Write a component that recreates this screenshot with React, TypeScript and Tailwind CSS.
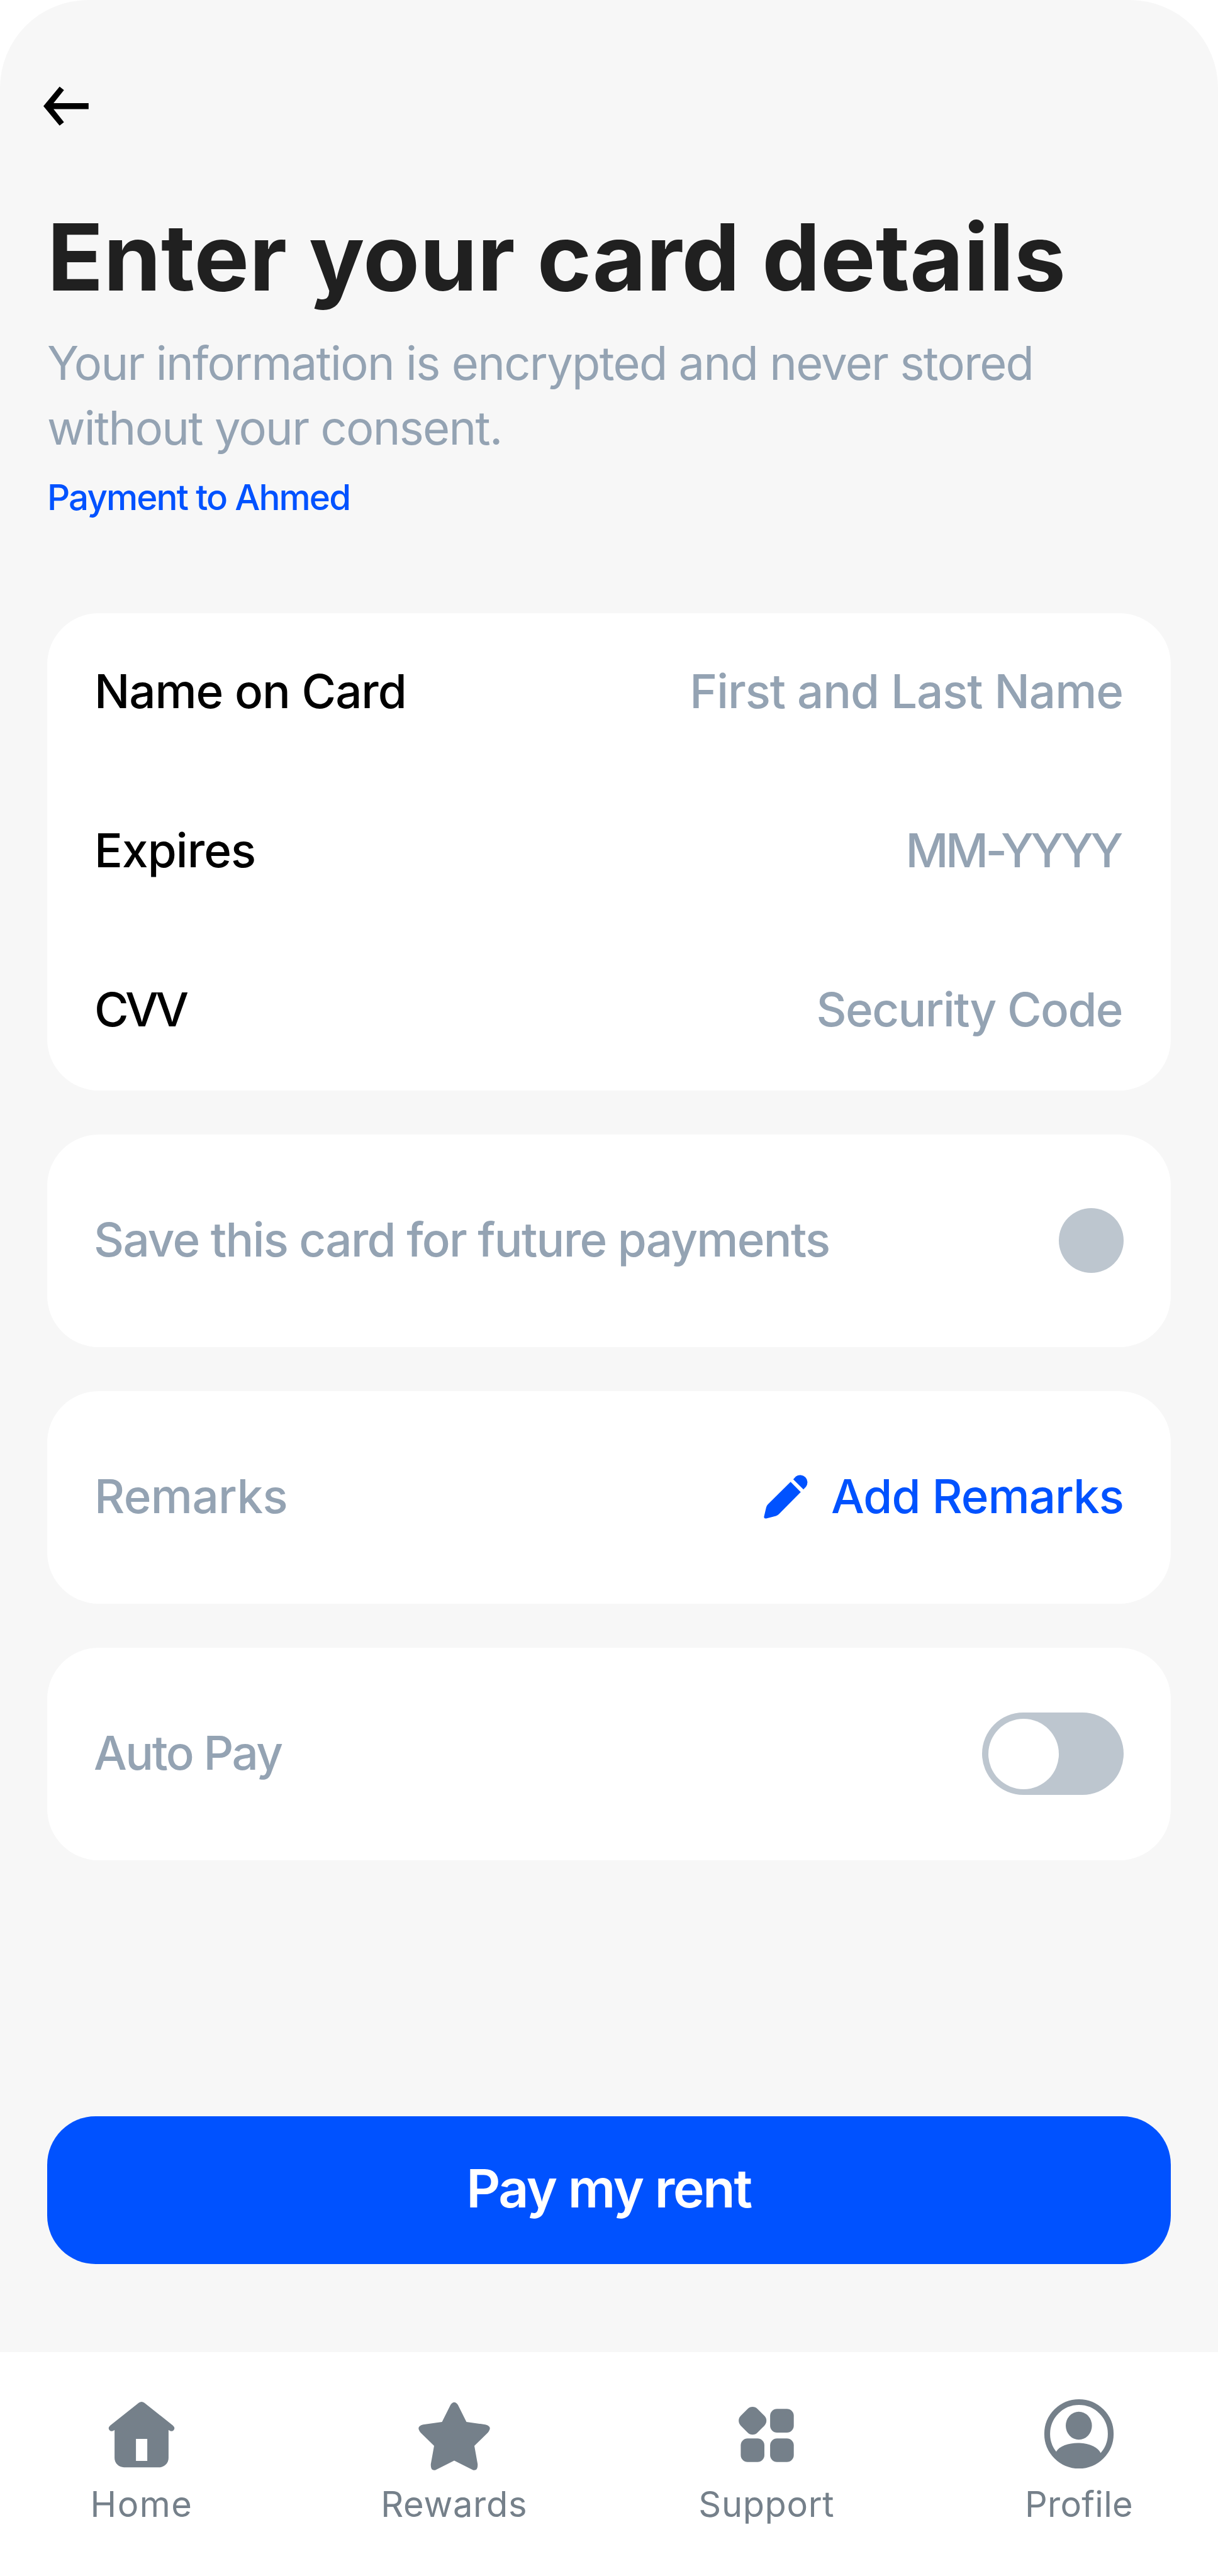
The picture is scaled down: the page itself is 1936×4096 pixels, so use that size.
interface FieldProps {
  label: string;
  placeholder: string;
  labelClass: string;
  placeholderClass: string;
}
const Field: React.FC<FieldProps> = ({ label, placeholder, labelClass, placeholderClass }) => {
  return (
    <div className="flex h-[253px] items-center justify-between pb-1">
      <span className={`text-black ${labelClass}`}>{label}</span>
      <span className={`text-[#94a3b3] ${placeholderClass}`}>{placeholder}</span>
    </div>
  );
};

interface OptionCardProps {
  label: string;
  labelClass: string;
  children?: React.ReactNode;
}
const OptionCard: React.FC<OptionCardProps> = ({ label, labelClass, children }) => {
  return (
    <div className="flex h-[337.4px] items-center justify-between rounded-[82px] bg-white pr-[75px] pl-[74px]">
      <span className={`pb-1 text-[#94a3b3] ${labelClass}`}>{label}</span>
      {children}
    </div>
  );
};

const BackArrow = () => (
  <svg className="block h-[64px] w-[73px]" viewBox="0 0 73 64" fill="#000">
    <path d="M0 31.8 25.7.7 32.7 6.3 16.1 26.9H71.8V36.5H16.1L32.7 57.2 25.7 62.8Z" />
  </svg>
);

const PencilIcon = () => (
  <svg className="block h-[74px] w-[71px]" viewBox="60 62 368 384" fill="#0052ff">
    <path d="M281 136 365 220 185 402Q174 413 160 417L80 438Q60 441 62 422L80 346Q84 331 95 320Z" />
    <path d="M303 115 324 92A60 60 0 0 1 408 176L387 198Z" />
  </svg>
);

const HomeIcon = () => (
  <path
    fillRule="evenodd"
    d="M60.3 6.6Q56 3.6 51.7 6.6L6.4 42.4Q1.8 46.4 5 50.2 8.6 53.4 13.1 49.8V94.2A15 15 0 0 0 28.1 109.2H83.9A15 15 0 0 0 98.9 94.2V49.8Q103.4 53.4 107 50.2 110.2 46.4 105.6 42.4ZM47.1 64H65.1V99H47.1Z"
  />
);

const StarIcon = () => (
  <path d="M50.2 9.8Q56 1.6 61.8 9.8L75.4 37 105.5 41.2Q116 43.8 111.2 51.6 110.4 53 109 54.4L88 75 93.2 104Q93.9 115.4 85.8 113.6L56 98.6 26.2 113.6Q18.1 115.4 18.8 104L24 75 3 54.4Q1.6 53 .8 51.6-4 43.8 6.5 41.2L36.6 37Z" />
);

const SupportIcon = () => (
  <>
    <rect x="15.4" y="16.3" width="37.6" height="37.6" rx="11" transform="rotate(45 34.2 35.1)" />
    <rect x="62.1" y="16.3" width="37.6" height="37.6" rx="11" />
    <rect x="15.4" y="63.2" width="37.6" height="37.6" rx="11" />
    <rect x="62.1" y="63.2" width="37.6" height="37.6" rx="11" />
  </>
);

const ProfileIcon = () => (
  <>
    <circle cx="56" cy="56" r="50.5" fill="none" stroke="currentColor" strokeWidth="9.2" />
    <ellipse cx="55.8" cy="43" rx="20.8" ry="22.3" />
    <path d="M20 84C30 66 80 65 90.5 86.5L91.5 91A50.5 50.5 0 0 1 20.5 91Z" />
  </>
);

const tabs = [
  { name: "Home", Icon: HomeIcon, spacing: "tracking-[1.5px]" },
  { name: "Rewards", Icon: StarIcon, spacing: "tracking-[0.7px]" },
  { name: "Support", Icon: SupportIcon, spacing: "tracking-[0.65px]" },
  { name: "Profile", Icon: ProfileIcon, spacing: "tracking-[0.3px]" },
];

export default function App() {
  return (
    <div className="h-[4096px] w-[1936px] overflow-hidden bg-white font-['Inter','Liberation_Sans',sans-serif]">
      <main className="h-[3740px] rounded-t-[140px] bg-[#f7f7f7] px-[75px] pt-[137px]">
        <button className="-ml-[6px] block" aria-label="Back">
          <BackArrow />
        </button>

        <h1 className="mt-[120px] text-[147px] leading-[176px] font-bold tracking-[0.1px] whitespace-nowrap text-[#202020]">
          Enter your card details
        </h1>
        <p className="mt-[29px] text-[74px] leading-[103px] tracking-[-1.7px] whitespace-nowrap text-[#94a3b3]">
          Your information is encrypted and never stored
          <br />
          without your consent.
        </p>
        <p className="mt-[23px] text-[56.5px] leading-[72px] font-[450] tracking-[-1.9px] text-[#0052ff]">
          Payment to Ahmed
        </p>

        <div className="mt-[147.7px] flex flex-col gap-[70.6px] text-[74.5px] leading-[90px] font-medium whitespace-nowrap">
          <div className="rounded-[82px] bg-white px-[75px]">
            <Field
              label="Name on Card"
              placeholder="First and Last Name"
              labelClass="tracking-[-1.07px]"
              placeholderClass="tracking-[-1.03px] mr-px"
            />
            <Field
              label="Expires"
              placeholder="MM-YYYY"
              labelClass="tracking-[-0.9px]"
              placeholderClass="tracking-[-4.4px] mr-[5px]"
            />
            <Field
              label="CVV"
              placeholder="Security Code"
              labelClass="tracking-[-5.7px]"
              placeholderClass="tracking-[-1.6px] mr-[2px]"
            />
          </div>

          <OptionCard label="Save this card for future payments" labelClass="tracking-[-1.7px]">
            <span className="size-[103px] rounded-full bg-[#bdc6cf]" />
          </OptionCard>

          <OptionCard label="Remarks" labelClass="pl-px tracking-[-0.6px]">
            <button className="flex items-center gap-[36px] pb-1 text-[#0052ff]">
              <PencilIcon />
              <span className="tracking-[-0.95px]">Add Remarks</span>
            </button>
          </OptionCard>

          <OptionCard label="Auto Pay" labelClass="tracking-[-2.5px]">
            <span className="flex h-[131px] w-[225px] items-center rounded-full bg-[#bdc6cf] pl-[10px]">
              <span className="size-[112px] rounded-full bg-white" />
            </span>
          </OptionCard>
        </div>

        <button className="mt-[407px] flex h-[235px] w-full items-center justify-center rounded-[77px] bg-[#0052ff] pr-px pb-1 text-[84px] leading-none font-[560] tracking-[-2.3px] text-white">
          Pay my rent
        </button>
      </main>

      <nav className="flex h-[356px] justify-between bg-white pt-[74px] pr-[101px] pl-[105px] text-[#75808a]">
        {tabs.map(({ name, Icon, spacing }) => (
          <div key={name} className="flex w-[240px] flex-col items-center">
            <svg className="size-[112px] overflow-visible" viewBox="0 0 112 112" fill="currentColor">
              <Icon />
            </svg>
            <span className={`mt-[22px] text-[56px] leading-[68px] ${spacing}`}>{name}</span>
          </div>
        ))}
      </nav>
    </div>
  );
}
